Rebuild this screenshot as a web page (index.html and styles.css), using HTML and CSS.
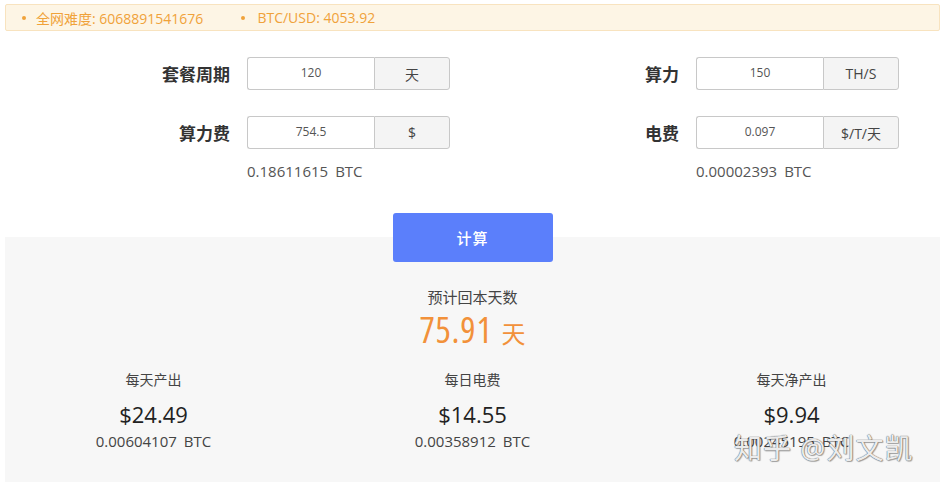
FILE: index.html
```html
<!DOCTYPE html>
<html lang="zh">
<head>
<meta charset="utf-8">
<title>挖矿收益计算</title>
<link rel="stylesheet" href="styles.css">
</head>
<body>
<div class="page">
  <ul class="notice">
    <li>全网难度: 6068891541676</li>
    <li>BTC/USD: 4053.92</li>
  </ul>

  <div class="form">
    <label class="label">套餐周期</label>
    <div class="group"><input class="field" type="text" value="120" readonly><span class="addon">天</span></div>
    <label class="label">算力</label>
    <div class="group"><input class="field" type="text" value="150" readonly><span class="addon">TH/S</span></div>

    <label class="label">算力费</label>
    <div class="group"><input class="field" type="text" value="754.5" readonly><span class="addon">$</span></div>
    <label class="label">电费</label>
    <div class="group"><input class="field" type="text" value="0.097" readonly><span class="addon">$/T/天</span></div>

    <span></span>
    <div class="hint">0.18611615<span class="unit">BTC</span></div>
    <span></span>
    <div class="hint">0.00002393<span class="unit">BTC</span></div>
  </div>

  <div class="action"><button class="btn" type="button">计算</button></div>

  <section class="result">
    <div class="payback">
      <div class="payback-title">预计回本天数</div>
      <div class="payback-value"><span class="big">75.91</span><span class="day">天</span></div>
    </div>
    <div class="stats">
      <div class="stat">
        <div class="stat-title">每天产出</div>
        <div class="stat-usd">$24.49</div>
        <div class="stat-btc">0.00604107<span class="unit">BTC</span></div>
      </div>
      <div class="stat">
        <div class="stat-title">每日电费</div>
        <div class="stat-usd">$14.55</div>
        <div class="stat-btc">0.00358912<span class="unit">BTC</span></div>
      </div>
      <div class="stat">
        <div class="stat-title">每天净产出</div>
        <div class="stat-usd">$9.94</div>
        <div class="stat-btc">0.00245195<span class="unit">BTC</span></div>
      </div>
    </div>
  </section>
  <div class="watermark">知乎 @刘文凯</div>
</div>
</body>
</html>
```
FILE: styles.css
```css
* { box-sizing: border-box; }
html, body { margin: 0; padding: 0; background: #fff; }
body {
  font-family: "Open Sans", "Noto Sans CJK SC", sans-serif;
  color: #333;
  font-size: 14px;
}
.page {
  position: relative;
  width: 947px;
  height: 488px;
  padding: 4px 7px 0 5px;
  overflow: hidden;
}
.notice {
  margin: 0;
  height: 27px;
  background: #fdf5e5;
  border: 1px solid #f8e3bf;
  border-radius: 2px;
  list-style: none;
  display: flex;
  align-items: center;
  padding: 0 0 0 16px;
  color: #f0a23a;
  font-size: 14px;
}
.notice li { display: flex; align-items: center; }
.notice li::before {
  content: "";
  width: 4px;
  height: 4px;
  border-radius: 50%;
  background: #f0a23a;
  margin-right: 10px;
}
.notice li + li { margin-left: 38px; }
.notice li + li::before { margin-right: 12px; }

.form {
  margin-top: 26px;
  display: grid;
  grid-template-columns: 242px 203px 246px 203px;
  grid-template-rows: 59px 45px 20px;
}
.label {
  height: 33px;
  padding-right: 17px;
  font-size: 17px;
  font-weight: 700;
  color: #333;
  display: flex;
  align-items: center;
  justify-content: flex-end;
}
.group { display: flex; height: 33px; }
.field {
  width: 127px;
  height: 33px;
  border: 1px solid #c8c8c8;
  border-right: none;
  border-radius: 3px 0 0 3px;
  text-align: center;
  font: inherit;
  font-size: 12px;
  color: #555;
  background: #fff;
  padding: 0 0 2px;
  outline: none;
}
.addon {
  flex: 1;
  display: flex;
  align-items: center;
  justify-content: center;
  border: 1px solid #c8c8c8;
  border-radius: 0 3px 3px 0;
  background: #f4f4f4;
  color: #444;
  font-size: 14px;
}
.hint {
  font-size: 15px;
  line-height: 20px;
  color: #555;
}
.unit { margin-left: 7px; }

.action {
  display: flex;
  justify-content: center;
  margin: 32px 0 -25px 0;
  position: relative;
  z-index: 1;
}
.btn {
  width: 160px;
  height: 49px;
  border: none;
  border-radius: 3px;
  background: #5b7ffb;
  color: #fff;
  font: inherit;
  font-size: 15px;
  font-weight: 500;
  letter-spacing: 1px;
}

.result {
  background: #f7f7f7;
  height: 245px;
  padding-top: 50px;
}
.payback { text-align: center; }
.payback-title {
  font-size: 15px;
  line-height: 20px;
  color: #444;
}
.payback-value {
  margin-top: 3px;
  line-height: 40px;
  height: 40px;
  color: #f2913a;
}
.big {
  font-family: "Open Sans", sans-serif;
  font-stretch: 75%;
  font-size: 36px;
  letter-spacing: 0.8px;
}
.day {
  font-size: 24px;
  margin-left: 9px;
}
.stats {
  display: grid;
  grid-template-columns: repeat(3, 319px);
  margin: 20px -11px 0 -11px;
  padding-right: 2px;
}
.stat { text-align: center; }
.stat-title {
  font-size: 14px;
  line-height: 20px;
  color: #444;
}
.stat-usd {
  margin-top: 9px;
  font-size: 22px;
  line-height: 30px;
  color: #222;
}
.stat-btc {
  margin-top: 2px;
  font-size: 15px;
  line-height: 20px;
  color: #444;
}

.watermark {
  position: absolute;
  left: 734px;
  top: 428px;
  font-size: 28px;
  line-height: 40px;
  letter-spacing: 1px;
  color: rgba(255, 255, 255, 0.9);
  text-shadow: 0 0 1px #666, 0 0 1px #666, 1px 1px 1px rgba(0,0,0,0.3);
  white-space: nowrap;
}
```
